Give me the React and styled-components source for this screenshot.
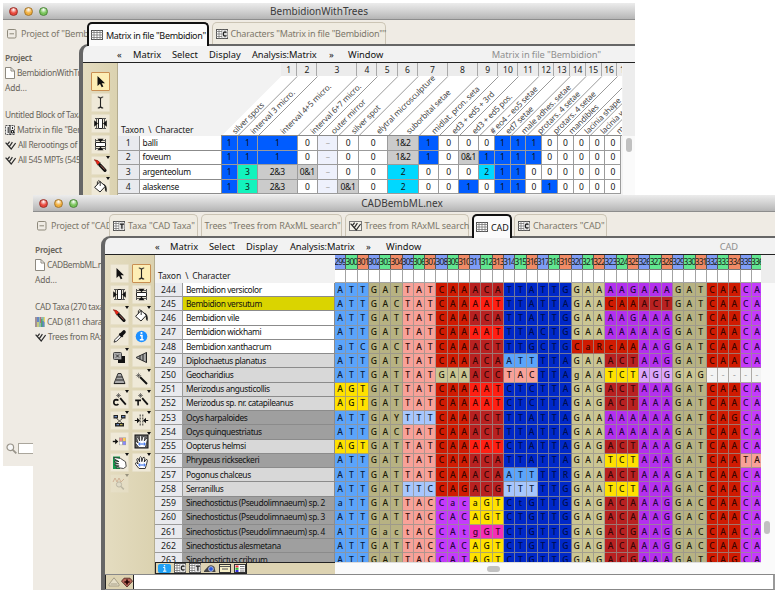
import React from "react";
import styled, { createGlobalStyle } from "styled-components";

const Global = createGlobalStyle`
  * { box-sizing: border-box; }
  html, body { margin: 0; padding: 0; background: #fff; overflow: hidden; }
  body { font-family: "Noto Sans", "Open Sans", sans-serif; color: #1c1c1c; }
  svg { display: block; flex: none; }
`;

const Desktop = styled.div`
  position: relative;
  width: 775px;
  height: 590px;
  overflow: hidden;
  background: #fff;
`;

const Window = styled.section`
  position: absolute;
  left: ${(p) => p.$x}px;
  top: ${(p) => p.$y}px;
  width: ${(p) => p.$w}px;
  height: ${(p) => p.$h}px;
  display: flex;
  flex-direction: column;
  background: #efebe4;
  overflow: hidden;
`;

const TitleBar = styled.header`
  flex: none;
  height: 17px;
  display: grid;
  grid-template-columns: 60px 1fr 60px;
  align-items: center;
  padding-left: ${(p) => p.$pad}px;
  background: linear-gradient(#ececec, #d2d2d2 50%, #b5b5b5);
  border-bottom: 1px solid #8d8d8d;
`;

const Lights = styled.div`
  display: flex;
  gap: 6px;
`;

const Light = styled.i`
  width: 9px;
  height: 9px;
  border-radius: 50%;
  border: 1px solid ${(p) => p.$edge};
  background: radial-gradient(circle at 50% 25%, #fff 0, ${(p) => p.$c} 55%);
`;

const Title = styled.h1`
  margin: 0;
  font-size: 10px;
  line-height: 14px;
  font-weight: 400;
  text-align: center;
  letter-spacing: ${(p) => p.$track || 0}px;
  padding-right: ${(p) => p.$shift || 0}px;
  color: #3a3a3a;
`;

const TabStrip = styled.nav`
  flex: none;
  height: 24px;
  display: flex;
  align-items: flex-end;
  position: relative;
  z-index: 1;
`;

const ProjectTab = styled.div`
  flex: none;
  height: 21px;
  width: ${(p) => p.$w}px;
  padding-left: 4px;
  display: flex;
  align-items: center;
  gap: 4px;
  overflow: hidden;
  white-space: nowrap;
  font-size: 9px;
  letter-spacing: -0.22px;
  color: #7d786b;
`;

const Tab = styled.div`
  flex: none;
  height: ${(p) => (p.$on ? 24 : 22)}px;
  width: ${(p) => p.$w}px;
  margin-right: ${(p) => p.$gap ?? 3}px;
  margin-bottom: ${(p) => (p.$on ? -2 : 0)}px;
  padding: 0 0 0 ${(p) => (p.$on ? 2 : 3)}px;
  display: flex;
  align-items: center;
  gap: 3px;
  white-space: nowrap;
  font-size: 9px;
  letter-spacing: ${(p) => p.$track ?? -0.15}px;
  border: ${(p) => (p.$on ? "2px solid #111" : "1px solid #cbc4b4")};
  border-bottom: 0;
  border-radius: 5px 5px 0 0;
  background: ${(p) => (p.$on ? "#fbfbfb" : "#efebe1")};
  color: ${(p) => (p.$on ? "#111" : "#7d786b")};
`;

const Main = styled.div`
  flex: 1;
  min-height: 0;
  display: flex;
`;

const Sidebar = styled.aside`
  flex: none;
  width: ${(p) => p.$w}px;
  padding: ${(p) => p.$top}px 0 0 2px;
  overflow: hidden;
  white-space: nowrap;
  display: flex;
  flex-direction: column;
  color: #69655b;
`;

const SideItem = styled.div`
  flex: none;
  height: 15px;
  margin-top: ${(p) => p.$gap || 0}px;
  display: flex;
  align-items: center;
  gap: 2px;
  font-size: 8.4px;
  letter-spacing: ${(p) => (p.$head ? -0.25 : p.$track ?? -0.34)}px;
  font-weight: ${(p) => (p.$head ? 600 : 400)};
`;

const Search = styled.div`
  margin-top: auto;
  height: 29px;
  padding: 0 0 7px 1px;
  display: flex;
  align-items: center;
  gap: 1px;
`;

const SearchField = styled.div`
  flex: 1;
  height: 11px;
  border: 1px solid #aaa69c;
  background: #fff;
`;

const Panel = styled.main`
  flex: 1;
  min-width: 0;
  display: flex;
  flex-direction: column;
  border-left: 4px solid #666;
  border-top: 2px solid #666;
  border-top-left-radius: 9px;
  background: #f2f2f2;
  overflow: hidden;
`;

const MenuBar = styled.div`
  flex: none;
  height: 17px;
  padding-left: ${(p) => p.$pad}px;
  display: flex;
  align-items: center;
  border-bottom: 1px solid #222;
  font-size: 9.3px;
  white-space: nowrap;
  color: #111;
`;

const MenuItem = styled.span`
  width: ${(p) => p.$w}px;
  letter-spacing: ${(p) => p.$track || 0}px;
`;

const MenuTitle = styled.span`
  margin-left: auto;
  padding-right: ${(p) => p.$pad}px;
  letter-spacing: -0.1px;
  color: #8f8f8f;
`;

const Work = styled.div`
  flex: 1;
  min-height: 0;
  display: flex;
`;

const ToolPalette = styled.div`
  flex: none;
  width: ${(p) => p.$w}px;
  padding: 9px 0 0 ${(p) => p.$pad}px;
  display: grid;
  grid-template-columns: repeat(${(p) => p.$cols}, 19px);
  grid-auto-rows: 19px;
  column-gap: 2.5px;
  row-gap: 2px;
  align-content: start;
  background: linear-gradient(90deg, #e4dcc0, #dbd2b0);
  border-right: 1px solid #b5ad90;
`;

const ToolButton = styled.button`
  position: relative;
  padding: 0;
  display: grid;
  place-items: center;
  border: 1px solid ${(p) => (p.$on ? "#c98f52" : "#e6dfc8")};
  background: ${(p) => (p.$on ? "#fdeeb5" : "#efe9d8")};
  border-radius: 1px;
  opacity: ${(p) => (p.$dim ? 0.35 : 1)};
`;

const MenuMark = styled.i`
  position: absolute;
  top: -1px;
  right: -1px;
  border: 2.5px solid transparent;
  border-top: 3.5px solid #111;
  border-bottom: 0;
`;

const Sheet = styled.div`
  flex: 1;
  min-width: 0;
  display: flex;
  flex-direction: column;
  overflow: hidden;
`;

/* ---------- character matrix (back window) ---------- */

const SlantHeader = styled.div`
  flex: none;
  height: 73px;
  display: flex;
  align-items: flex-end;
`;

const CornerLabel = styled.div`
  width: ${(p) => p.$w}px;
  padding: 0 0 ${(p) => p.$bottom ?? 0}px 3px;
  font-size: 8.6px;
  line-height: 12px;
  letter-spacing: -0.15px;
  word-spacing: 2px;
  white-space: nowrap;
  color: #222;
`;

const Columns = styled.div`
  display: grid;
  grid-template-columns: ${(p) => p.$cols};
  grid-auto-rows: ${(p) => p.$row}px;
`;

const NumberedTop = styled.div`
  height: 73px;
  width: 401px;
  overflow: hidden;
  display: flex;
  flex-direction: column;
`;

const NumberRow = styled(Columns)`
  margin-left: 60px;
  width: 500px;
`;

const TopNumber = styled.div`
  display: grid;
  place-items: center;
  font-size: 8.5px;
  line-height: 12px;
  background: #ececec;
  border-right: 1px solid #a9a9a9;
  color: #222;
`;

const TraitRow = styled(Columns)`
  width: 505px;
  overflow: hidden;
`;

const IndexCell = styled.div`
  display: flex;
  align-items: center;
  justify-content: center;
  font-size: 8.7px;
  line-height: 12px;
  background: #e9eaee;
  border-right: 1px solid #9b9b9b;
  border-bottom: 1px solid #9b9b9b;
`;

const taxonTint = { white: "#ffffff", yellow: "#dad400", light: "#d8d8d8", dark: "#9f9f9f" };

const TaxonCell = styled.div`
  display: flex;
  align-items: center;
  padding-left: 3px;
  font-size: 8.4px;
  line-height: 12px;
  letter-spacing: ${(p) => p.$track ?? -0.38}px;
  white-space: nowrap;
  overflow: hidden;
  background: ${(p) => taxonTint[p.$tint || "white"]};
  border-right: 1px solid #8b8b8b;
  border-bottom: 1px solid #8b8b8b;
  color: #111;
`;

const StateCell = styled.div`
  display: grid;
  place-items: center;
  font-size: 8.5px;
  line-height: 12px;
  letter-spacing: -0.3px;
  background: ${(p) => p.$bg};
  color: ${(p) => (p.$faint ? "#aaa" : "#111")};
  border-right: 1px solid #9b9b9b;
  border-bottom: 1px solid #9b9b9b;
`;

const ScrollTrack = styled.div`
  flex: none;
  width: ${(p) => p.$w}px;
  padding: ${(p) => p.$top}px 0 0 ${(p) => p.$left}px;
  background: linear-gradient(#ededed ${(p) => p.$start}px, #fafafa ${(p) => p.$start}px);
`;

const Thumb = styled.div`
  width: ${(p) => p.$w}px;
  height: ${(p) => p.$h}px;
  border-radius: 4px;
  background: #c1c1c1;
`;

/* ---------- sequence matrix (front window) ---------- */

const SiteHeader = styled.div`
  flex: none;
  height: 28px;
  display: flex;
  align-items: flex-end;
`;

const Sites = styled.div`
  width: 426px;
  overflow: hidden;
  display: grid;
  grid-template-columns: repeat(38, 11.27px);
  grid-template-rows: ${(p) => p.$rows};
`;

const siteTint = ["#7f9df5", "#62e690", "#f08b66"];

const SiteNumber = styled.div`
  display: flex;
  justify-content: center;
  overflow: hidden;
  font-size: 8.4px;
  line-height: 13px;
  letter-spacing: -0.85px;
  background: ${(p) => siteTint[p.$k]};
  border-right: 1px solid #555;
  color: #182018;
  white-space: nowrap;
`;

const SiteBlank = styled.div`
  background: #fff;
  border-right: 1px solid #a3a3a3;
  border-bottom: 1px solid #a3a3a3;
  border-top: 1px solid #777;
`;

const SeqArea = styled.div`
  flex: 1;
  min-height: 0;
  overflow: hidden;
`;

const SeqRow = styled.div`
  display: flex;
  height: 14.24px;
`;

const RowHead = styled(Columns)`
  width: 180px;
  flex: none;
`;

const Base = styled.div`
  display: grid;
  place-items: center;
  font-size: 8.6px;
  font-weight: 500;
  line-height: 12px;
  background: ${(p) => p.$bg};
  color: ${(p) => p.$fg};
  border-right: 1px solid rgba(150, 145, 140, 0.75);
  border-bottom: 1px solid rgba(150, 145, 140, 0.75);
`;

const SheetFoot = styled.div`
  flex: none;
  height: 12px;
  display: flex;
`;

const IconShelf = styled.div`
  width: 92px;
  display: flex;
  align-items: center;
  gap: 3px;
  padding-left: 2px;
  border: 1px solid #222;
  background: #ddd3b2;
`;

const ShelfRest = styled.div`
  width: 88px;
  background: #ddd3b2;
  border-top: 1px solid #222;
`;

const HorizontalTrack = styled.div`
  width: 426px;
  padding: 3px 0 0 152px;
  background: #fafafa;
  border-top: 1px solid #ddd;
`;

const StatusBar = styled.div`
  flex: none;
  height: 16px;
  display: flex;
  border-top: 1px solid #888;
  border-bottom: 1px solid #888;
  border-right: 2px solid #999;
  background: #fff;
`;

const StatusIcons = styled.div`
  width: 29px;
  display: flex;
  align-items: center;
  gap: 1px;
  padding-left: 2px;
  border: 1px solid #222;
  border-width: 0 1px 0 1px;
  background: #ddd3b2;
`;

/* ---------- icons ---------- */

const MinusBox = () => (
  <svg width="10" height="10" viewBox="0 0 10 10" fill="none" stroke="#8e897b">
    <rect x="0.5" y="0.5" width="8.5" height="8.5" rx="1.2" />
    <path d="M2.5 4.8H7" />
  </svg>
);

const GridIcon = ({ letter }) => (
  <svg width="12" height="10" viewBox="0 0 12 10">
    <rect x="0.5" y="0.5" width="11" height="9" fill="#fff" stroke="#555" />
    <path d="M0 2.5H12M0 5H12M0 7.5H12M3 0V10M6 0V10M9 0V10" stroke="#777" strokeWidth="0.8" />
    {letter && (
      <>
        <rect x="6" y="1.5" width="5.5" height="7" fill="#ddd" />
        {letter === "C" ? (
          <path d="M10.4 3.6Q9.8 2.8 8.9 2.8Q7.3 3 7.3 5Q7.3 7 8.9 7.2Q9.8 7.2 10.4 6.4" fill="none" stroke="#222" strokeWidth="1.3" />
        ) : (
          <path d="M6.8 3.2H11M8.9 3V7.8" fill="none" stroke="#222" strokeWidth="1.3" />
        )}
      </>
    )}
  </svg>
);

const TreeIcon = ({ boxed }) => (
  <svg width={boxed ? 13 : 11} height="10" viewBox={boxed ? "-1 0 13 10" : "0 0 11 10"} fill="none" stroke="#2b2b2b" strokeWidth="1.2">
    {boxed && <rect x="-0.5" y="0.5" width="12" height="9" fill="#f4f2ea" stroke="#777" strokeWidth="1" />}
    <path d="M0.6 2.6L6.2 9L10.6 3M2.4 4.7L4.6 1.6M4.2 6.8L7.4 2.2" />
  </svg>
);

const PageIcon = () => (
  <svg width="10" height="12" viewBox="0 0 10 12">
    <path d="M0.5 0.5H6L9.5 4V11.5H0.5Z" fill="#fff" stroke="#8d8980" />
    <path d="M6 0.5V4H9.5" fill="none" stroke="#8d8980" />
  </svg>
);

const MiniMatrix = () => (
  <svg width="10" height="10" viewBox="0 0 10 10">
    <rect x="0.5" y="0.5" width="9" height="9" fill="#eee" stroke="#555" strokeDasharray="2 1" />
    <path d="M3.2 2V8M5 0V10M7.5 2V4M6.5 5.5H8.5V8H6.5Z" stroke="#222" fill="none" />
  </svg>
);

const ColorMatrix = () => (
  <svg width="10" height="10" viewBox="0 0 10 10">
    <rect width="10" height="10" fill="#8fb8b0" />
    <path d="M1 0V10M5.5 0V6" stroke="#b86a78" strokeWidth="1" />
    <path d="M3 0V5M8 4V10" stroke="#5672d0" strokeWidth="1.4" />
    <path d="M3 5V10M9.5 0V5" stroke="#e8d860" strokeWidth="1.2" />
    <path d="M6.8 2V10" stroke="#38a050" strokeWidth="1" />
  </svg>
);

const Lens = () => (
  <svg width="11" height="11" viewBox="0 0 11 11" fill="none" stroke="#99948a">
    <circle cx="4.3" cy="4.3" r="3.3" fill="#f7f7f7" strokeWidth="1.2" />
    <path d="M6.8 6.8L10.3 10.3" strokeWidth="1.8" />
  </svg>
);

const palm =
  "M5 13.5L1.8 9.6Q0.8 7.8 2.4 7.7L4.2 9L2.8 4.6Q3 3 4.3 3.8L5.6 7L5.6 2.6Q6.5 1 7.5 2.6L7.8 6.6L9 2.6Q10.4 1.6 10.8 3.2L10.3 7L12 4.6Q13.4 4.2 13.4 5.6L12.2 10.5L11.2 13.5Z";

const drawings = {
  arrow: <path d="M4.5 2V12L7 9.8L8.7 13.3L10.4 12.4L8.7 9.2H12Z" fill="#111" />,
  ibeam: <path d="M4.8 2Q7.5 2 7.5 4V11Q7.5 13 4.8 13M10.2 2Q7.5 2 7.5 4V11Q7.5 13 10.2 13" fill="none" stroke="#222" strokeWidth="1.1" />,
  widen: (
    <>
      <path d="M5.5 2.5H9.5V12.5H5.5Z" fill="#fff" stroke="#222" />
      <path d="M2 2.5H5M10 2.5H13M2 12.5H5M10 12.5H13M3.5 2.5V12.5M11.5 2.5V12.5" stroke="#555" />
      <path d="M5 7.5L1.2 4.2V10.8ZM10 7.5L13.8 4.2V10.8Z" fill="#111" />
    </>
  ),
  heighten: (
    <>
      <path d="M2.5 5.5H12.5V9.5H2.5Z" fill="#fff" stroke="#222" />
      <path d="M2.5 2V5M12.5 2V5M2.5 10V13M12.5 10V13M2.5 3.5H12.5M2.5 11.5H12.5" stroke="#555" />
      <path d="M7.5 5.2L4.4 1.8H10.6ZM7.5 9.8L4.4 13.2H10.6Z" fill="#111" />
    </>
  ),
  brush: (
    <>
      <path d="M6.8 6.8L12 12.4" stroke="#111" strokeWidth="3.2" strokeLinecap="round" />
      <path d="M7.6 7.2L11.8 11.6" stroke="#b06058" strokeWidth="1" />
      <path d="M1.2 1.8Q5.4 1.8 7 4.8L4.8 7Q3.4 5.6 3 3.8Q2.4 2.6 1.2 1.8" fill="#ea2214" stroke="#601008" strokeWidth="0.5" />
      <path d="M4.8 7L7.2 4.8" stroke="#222" strokeWidth="1" />
    </>
  ),
  bucket: (
    <>
      <path d="M7 2.5L12.4 7.2L7 13L1.6 8.4Z" fill="#fff" stroke="#222" />
      <path d="M4.4 5.5V2.8Q5.8 0.4 7.2 2.8V7" fill="none" stroke="#222" strokeWidth="0.9" />
      <path d="M10 4.4Q14.8 6 13.6 13Q11.6 12.6 11.8 7.4Z" fill="#222" />
    </>
  ),
  dropper: (
    <>
      <path d="M2 13.2L3 10.6L8.4 5.2L10 6.8L4.7 12.2Z" fill="#fff" stroke="#222" strokeWidth="0.9" />
      <path d="M7.4 4.5L10.7 7.8" stroke="#111" strokeWidth="2" />
      <path d="M9.3 5.7L12 3" stroke="#111" strokeWidth="3.6" strokeLinecap="round" />
    </>
  ),
  info: (
    <>
      <circle cx="7.5" cy="7.5" r="5.8" fill="#1e90ff" />
      <path d="M6 6.4H8V10.6M5.8 10.8H9.6" stroke="#fff" strokeWidth="1.5" fill="none" />
      <circle cx="7.5" cy="4" r="1.1" fill="#fff" />
    </>
  ),
  stack: (
    <>
      <rect x="6" y="6" width="7" height="7" fill="#111" />
      <rect x="1.5" y="2.5" width="8" height="7" rx="1" fill="#aaa" stroke="#444" />
      <path d="M4 4.5L7 7.5M7 4.5L4 7.5" stroke="#333" fill="none" />
    </>
  ),
  left: (
    <>
      <path d="M2 7.5L12.5 2.5V12.5Z" fill="#aaa" stroke="#333" />
      <path d="M6 5.5V9.5M9 4.2V10.8M12.4 2.5V12.5" stroke="#222" />
    </>
  ),
  cone: (
    <>
      <path d="M6 2.5H9L13 12.5H2Z" fill="#aaa" stroke="#333" />
      <path d="M5 6H10M4 9H11.5M2 12.6H13" stroke="#222" />
    </>
  ),
  wand: (
    <>
      <path d="M6 6L13 13" stroke="#111" strokeWidth="1.9" />
      <path d="M4.5 1.8V7.2M1.8 4.5H7.2M2.8 2.8L6.2 6.2M6.2 2.8L2.8 6.2" stroke="#444" strokeWidth="0.6" />
    </>
  ),
  wandC: (
    <>
      <path d="M8.2 6.2L13.8 12.6" stroke="#111" strokeWidth="1.8" />
      <path d="M6.5 1V6M4 3.5H9M4.9 1.9L8.1 5.1M8.1 1.9L4.9 5.1" stroke="#444" strokeWidth="0.6" />
      <path d="M6.4 8.6Q5.6 7.6 4.2 7.6Q1.8 7.8 1.8 10.2Q1.8 12.8 4.2 13Q5.6 13 6.4 12" fill="none" stroke="#111" strokeWidth="1.6" />
    </>
  ),
  wandT: (
    <>
      <path d="M8.2 6.2L13.8 12.6" stroke="#111" strokeWidth="1.8" />
      <path d="M6.5 1V6M4 3.5H9M4.9 1.9L8.1 5.1M8.1 1.9L4.9 5.1" stroke="#444" strokeWidth="0.6" />
      <path d="M1.2 8.4H7M4.1 8.4V13.6" fill="none" stroke="#111" strokeWidth="1.6" />
    </>
  ),
  swap: (
    <>
      <path d="M1.5 2H6V5.5H1.5ZM9 2H13.5V5.5H9ZM3 10H12V13.5H3Z" fill="#222" />
      <path d="M4.5 5.5L10 10M10.5 5.5L5 10" stroke="#333" strokeWidth="0.8" />
      <path d="M2.5 3.7H5M10 3.7H12.5M4.5 11.7H7" stroke="#7ba0e8" />
      <path d="M8 11.7H10.5" stroke="#d8c860" />
    </>
  ),
  split: (
    <>
      <path d="M6.2 1.5V13.5M8.8 1.5V13.5" stroke="#222" strokeWidth="0.9" strokeDasharray="2 1" />
      <path d="M0.8 7.5H4M11 7.5H14.2" stroke="#111" strokeWidth="1.2" />
      <path d="M6 7.5L3 4.8V10.2ZM9 7.5L12 4.8V10.2Z" fill="#111" />
    </>
  ),
  toColor: (
    <>
      <path d="M0.8 7.5H4" stroke="#111" strokeWidth="1.4" />
      <path d="M6.3 7.5L3.2 4.8V10.2Z" fill="#111" />
      <rect x="7" y="3.5" width="7" height="7.6" fill="#999" />
      <rect x="7.6" y="4" width="2.6" height="3" fill="#e88" />
      <rect x="11" y="4" width="2.6" height="3" fill="#fc5" />
      <rect x="7.6" y="7.7" width="2.6" height="3" fill="#fff" />
      <rect x="11" y="7.7" width="2.6" height="3" fill="#88f" />
    </>
  ),
  handBox: (
    <>
      <rect x="1" y="1" width="13" height="13" fill="#666" stroke="#111" />
      <path d={palm} fill="#fff" stroke="#222" strokeWidth="0.7" />
      <path d="M5 10H11M6.2 8.5L4.6 10L6.2 11.5M9.8 8.5L11.4 10L9.8 11.5" stroke="#2563e8" fill="none" />
    </>
  ),
  handGreen: (
    <>
      <rect x="1" y="1.5" width="7" height="12.5" fill="#169b50" />
      <path d="M2 2.5L8.5 3.4L13.5 6.8L14.2 11.5L11.5 13.5L7 12.8L4 13L4.6 11.6L7.2 11L3 10.4L3.2 9L6.6 8.8L2.4 7.2L2.8 5.9L7 6.6L2.2 3.9Z" fill="#fff" stroke="#222" strokeWidth="0.8" />
    </>
  ),
  hand: (
    <>
      <path d={palm} fill="#fff" stroke="#222" strokeWidth="0.9" />
      <path d="M5 10H11M6.2 8.5L4.6 10L6.2 11.5M9.8 8.5L11.4 10L9.8 11.5" stroke="#2563e8" fill="none" />
    </>
  ),
  search: (
    <>
      <path d="M1 6L3 2L5 6L7 2L9 6L12 3" fill="none" stroke="#b06a50" />
      <circle cx="7" cy="8.5" r="2.6" fill="#ddd" stroke="#777" />
      <path d="M9 10.5L11.8 13.4" stroke="#777" strokeWidth="1.6" />
    </>
  ),
};

const Tool = ({ name, on, menu, dim }) => (
  <ToolButton $on={on} $dim={dim} aria-label={name}>
    <svg width="15" height="15" viewBox="0 0 15 15">{drawings[name]}</svg>
    {menu && <MenuMark />}
  </ToolButton>
);

const InfoChip = () => (
  <svg width="13" height="9" viewBox="0 0 13 9">
    <rect width="13" height="9" rx="2" fill="#1ea0f5" />
    <path d="M5.2 3.5H6.8V7M5 7.2H8.4" stroke="#fff" fill="none" />
    <circle cx="6.5" cy="1.7" r="0.8" fill="#fff" />
  </svg>
);
const PlaneChip = () => (
  <svg width="12" height="9" viewBox="0 0 12 9">
    <path d="M0 7L4 2.5Q7.5 0 10.5 3L11.5 8H0Z" fill="#444" />
    <circle cx="7" cy="5" r="2.4" fill="#2c5ce0" stroke="#dde" strokeWidth="0.7" />
  </svg>
);
const PanelChip = () => (
  <svg width="12" height="9" viewBox="0 0 12 9">
    <rect x="0.5" y="0.5" width="11" height="8" fill="#f6efc8" stroke="#333" />
    <path d="M1 2.5H11M3 5H9" stroke="#555" />
  </svg>
);
const LegendChip = () => (
  <svg width="12" height="9" viewBox="0 0 12 9">
    <rect x="0.5" y="0.5" width="11" height="8" fill="#fff" stroke="#333" />
    <rect x="1.5" y="1.5" width="3" height="2" fill="#e33" />
    <rect x="1.5" y="3.8" width="3" height="2" fill="#3b3" />
    <rect x="1.5" y="6" width="3" height="2" fill="#33d" />
    <path d="M6 2.5H10.5M6 4.8H10.5M6 7H10.5" stroke="#555" strokeWidth="0.8" />
  </svg>
);
const UpTriangle = () => (
  <svg width="12" height="10" viewBox="0 0 12 10">
    <path d="M6 0.8L11 7.2V9H1V7.2Z" fill="#e6dfc8" stroke="#a79f88" />
    <path d="M2.5 7H9.5" stroke="#a79f88" />
  </svg>
);
const RedGem = () => (
  <svg width="12" height="11" viewBox="0 0 12 11">
    <path d="M3 1.2H9L11.5 4.2L6 10L0.5 4.2Z" fill="#b8685a" stroke="#4a201a" strokeWidth="0.8" />
    <path d="M6 2.4V7.6M3.4 5H8.6" stroke="#200" strokeWidth="1.6" />
  </svg>
);

/* ---------- data ---------- */

const edges = [
  221.5, 237.7, 258, 297.7, 318, 338.3, 358.7, 388.3, 418.7, 439, 459, 479.3, 495, 510.7, 526.5, 542.3,
  558, 574, 589.7, 605.6, 621.4, 637,
];
const widths = edges.slice(1).map((e, i) => +(e - edges[i]).toFixed(1));

const traits = [
  "silver spots", "interval 3 micro.", "interval 4+5 micro.", "interval 6+7 micro.", "outer mirror",
  "silver spot", "elytral microsculpture", "suborbital setae", "midlat. pron. seta", "ed3 + ed5 + 3rd",
  "ed3 + ed5 pos.", "# eo4 – eo5 setae", "ed7 setae", "male adhes. setae", "protars. 4 setae",
  "protars. 4 setae", "mandibles", "lacinia shape", "lacinia width", "mentum",
];

const species = [
  ["balli", "1 1 1 0 – 0 0 1&2 1 0 0 0 1 1 1 0 0 0 0 0"],
  ["foveum", "1 1 1 0 – 0 0 1&2 1 0 0&1 1 1 1 1 0 0 0 0 0"],
  ["argenteolum", "1 3 2&3 0&1 – 0 0 2 0 0 0 2 1 1 0 0 0 0 0 0"],
  ["alaskense", "1 3 2&3 0 – 0&1 0 2 0 0 1 0 1 1 0 1 0 0 0 0"],
];

const stateColor = (s) =>
  ({ 0: "#ffffff", 1: "#005cff", 2: "#00d8ff", 3: "#12f3bd", "–": "#eef1fc" }[s] || "#cbcbcb");

const sequences = [
  [244, "Bembidion versicolor", "white", "ATT GAT TAT CAA ACA TTA TTG GAA AAG AAA GAT CAA CA"],
  [245, "Bembidion versutum", "yellow", "ATT GAC TAT CAA AAT TTA TTA GAA CAA ACT GAT CAA CA"],
  [246, "Bembidion vile", "white", "ATT GAT TAT CAA ACA TTA TTG GAA AAG AAA GAT CAA CA"],
  [247, "Bembidion wickhami", "white", "ATT GAT TAT CAA AAT TTA CTG GAA AAA AAG GAT CAA CA"],
  [248, "Bembidion xanthacrum", "white", "aTC GAC TAT CAA ACT TTG CTG CaR cAA AAG GAT CAA CA"],
  [249, "Diplochaetus planatus", "light", "ATT GAT TAT CAA ACA ATT TTA GAA ACT AAG GAT CAA CA"],
  [250, "Geocharidius", "light", "ATT GAT TAT GAA ACC TAC TTA gAA TCT AGG GAG --- --"],
  [251, "Merizodus angusticollis", "light", "AGT GAT TAT CAA AAT CTC TTA GAG ACT AAA GAT CAA CA"],
  [252, "Merizodus sp. nr. catapileanus", "light", "AGT GAT TAT CAA AAT CTC TTA GAG ACT AAA GAT CAA CA"],
  [253, "Ocys harpaloides", "dark", "ATT GAY TTT CAA ACT TTA TTA GAA AAA AAA GAT CAG CA"],
  [254, "Ocys quinquestriatus", "dark", "ATT GAC TAT CAA ACT TTA TTA GAA AAA AAA GAT CAA CA"],
  [255, "Oopterus helmsi", "light", "AGT GAT TAT CAA AAT CTA TTA GAG ACT AAA GAT CAA CA"],
  [256, "Phrypeus rickseckeri", "dark", "ATT GAT TAT CAA ACA TTA TTA GAA TCT AAA GAT CAA TA"],
  [257, "Pogonus chalceus", "light", "ATT GAT TAT CAA ACA ATT TTR GAA ACT AAA GAT CAA CA"],
  [258, "Serranillus", "light", "ATT GAT TTC CAG ACG TTT TTG GAA TCT AAA GAC CAA CA"],
  [259, "Sinechostictus (Pseudolimnaeum) sp. 2", "dark", "aTT GAT TAC Cac aGT CtG TTG GAG ACA AAG GAC CAA CA"],
  [260, "Sinechostictus (Pseudolimnaeum) sp. 3", "dark", "ATT GAT TAC CAC AGT CTG TTG GAG ACA AAG GAC CAA CA"],
  [261, "Sinechostictus (Pseudolimnaeum) sp. 4", "dark", "ATT Gac tAC CAt gGT CTG TTG GAG ACG AAG GAC CAA CA"],
  [262, "Sinechostictus alesmetana", "dark", "ATT GAT TAC CAC AGT CTG TTG GAG ACA AAG GAC CAA CA"],
  [263, "Sinechostictus cribrum", "dark", "ATT GAT TAC CAT AGT CTG TTG GAG ACG AAA GAT CAG CA"],
];

const codonRules = [
  [/^AT/, "#5ba4fb", "#0b1c3a"],
  [/^GA[TCY]/, "#b7b283", "#1c1a08"],
  [/^GA/, "#cbc693", "#1c1a08"],
  [/^TA/, "#f8a198", "#2a0c08"],
  [/^CA[AGR]/, "#cf1b02", "#350400"],
  [/^CA/, "#c43bfb", "#25053a"],
  [/^AC/, "#b82121", "#330505"],
  [/^AA[TC]/, "#ff1f13", "#3a0300"],
  [/^AA/, "#b430ee", "#25053a"],
  [/^(AGT|TCT)/, "#ffe100", "#241f00"],
  [/^AGG/, "#dba4fb", "#241030"],
  [/^TT[TC]/, "#a7c6fd", "#0b1c3a"],
  [/^(TT|CT)/, "#0028c8", "#000d4a"],
  [/^GG/, "#f42db8", "#3a0328"],
];
const codonStyle = (c) => codonRules.find(([r]) => r.test(c.toUpperCase())) || [null, "#f3f3f3", "#aaa"];

const menus = ["«", "Matrix", "Select", "Display", "Analysis:Matrix", "»", "Window"];

const Menus = ({ pad, ws, title, right }) => (
  <MenuBar $pad={pad}>
    {menus.map((m, i) => (
      <MenuItem key={m} $w={ws[i]} $track={i === 4 ? -0.1 : 0}>{m}</MenuItem>
    ))}
    <MenuTitle $pad={right}>{title}</MenuTitle>
  </MenuBar>
);

const TrafficLights = () => (
  <Lights>
    <Light $c="#e8483c" $edge="#9c2d25" />
    <Light $c="#f0ae3c" $edge="#a5752a" />
    <Light $c="#79c45a" $edge="#4b8638" />
  </Lights>
);

const SlantLabels = () => (
  <svg width="402" height="60" viewBox="221 76 402 60">
    <path d="M221.5 136L281.5 76H640V136Z" fill="#fff" />
    {edges.slice(1).map((e) => (
      <path key={e} d={`M${e} 136L${e + 59.5} 76.5`} stroke="#8f8f8f" strokeWidth="0.9" />
    ))}
    <path d="M221 135.5H640" stroke="#8b8b8b" />
    {traits.map((t, i) => (
      <text
        key={i}
        transform={`translate(${(edges[i] + edges[i + 1]) / 2 + 6} 134.5) rotate(-44.8)`}
        fontSize="8"
        letterSpacing="-0.12"
        fill="#444"
      >
        {t}
      </text>
    ))}
  </svg>
);

const BackWindow = () => (
  <Window $x={3} $y={3} $w={632} $h={463}>
    <TitleBar $pad={6}>
      <TrafficLights />
      <Title $shift={6}>BembidionWithTrees</Title>
    </TitleBar>
    <TabStrip>
      <ProjectTab $w={84}><MinusBox />Project of "Bembidion"</ProjectTab>
      <Tab $on $w={122} $gap={2.5} $track={-0.33}><GridIcon />Matrix in file "Bembidion"</Tab>
      <Tab $w={174} $track={-0.2}><GridIcon letter="C" />Characters "Matrix in file "Bembidion""</Tab>
    </TabStrip>
    <Main>
      <Sidebar $w={76} $top={6}>
        <SideItem $head>Project</SideItem>
        <SideItem><PageIcon />BembidionWithTrees</SideItem>
        <SideItem $track={-0.1}>Add...</SideItem>
        <SideItem $gap={12}>Untitled Block of Taxa</SideItem>
        <SideItem $track={-0.25}><MiniMatrix />Matrix in file "Bembidion"</SideItem>
        <SideItem><TreeIcon />All Rerootings of tree</SideItem>
        <SideItem><TreeIcon />All 545 MPTs (545 trees)</SideItem>
        <Search><Lens /><SearchField /></Search>
      </Sidebar>
      <Panel>
        <Menus pad={34} ws={[16, 39, 37, 43, 77, 19, 50]} title={'Matrix in file "Bembidion"'} right={34} />
        <Work>
          <ToolPalette $cols={1} $w={35} $pad={8}>
            <Tool name="arrow" on />
            <Tool name="ibeam" />
            <Tool name="widen" />
            <Tool name="heighten" />
            <Tool name="brush" menu />
            <Tool name="bucket" menu />
          </ToolPalette>
          <Sheet>
            <SlantHeader>
              <CornerLabel $w={103}>Taxon \ Character</CornerLabel>
              <NumberedTop>
                <NumberRow $cols={widths.map((w) => w + "px").join(" ")} $row={13}>
                  {traits.slice(0, 17).map((_, i) => <TopNumber key={i}>{i + 1}</TopNumber>)}
                </NumberRow>
                <SlantLabels />
              </NumberedTop>
            </SlantHeader>
            {species.map(([name, states], r) => (
              <TraitRow key={name} $row={14.6} $cols={"21.5px 82px " + widths.map((w) => w + "px").join(" ")}>
                <IndexCell>{r + 1}</IndexCell>
                <TaxonCell $track={-0.25}>{name}</TaxonCell>
                {states.split(" ").map((s, i) => (
                  <StateCell key={i} $bg={stateColor(s)} $faint={s === "–"}>{s}</StateCell>
                ))}
              </TraitRow>
            ))}
          </Sheet>
          <ScrollTrack $w={12} $top={75} $left={3} $start={73}><Thumb $w={6} $h={14} /></ScrollTrack>
        </Work>
      </Panel>
    </Main>
  </Window>
);

const tools = [
  ["arrow"], ["ibeam", "on"], ["widen"], ["heighten"], ["brush", "menu"], ["bucket", "menu"],
  ["dropper"], ["info"], ["stack", "menu"], ["left"], ["cone"], ["wand", "menu"],
  ["wandC", "menu"], ["wandT", "menu"], ["swap", "menu"], ["split", "menu"], ["toColor"], ["handBox", "menu"],
  ["handGreen", "menu"], ["hand", "menu"], ["search", "dim"],
];

const FrontWindow = () => (
  <Window $x={33} $y={195} $w={742} $h={395}>
    <TitleBar $pad={6}>
      <TrafficLights />
      <Title $shift={10}>CADBembML.nex</Title>
    </TitleBar>
    <TabStrip>
      <ProjectTab $w={76}><MinusBox />Project of "CADBemb"</ProjectTab>
      <Tab $w={88.5} $track={-0.1}><GridIcon letter="T" />Taxa "CAD Taxa"</Tab>
      <Tab $w={141} $track={-0.1}>Trees "Trees from RAxML search"</Tab>
      <Tab $w={124.5} $track={-0.1}><TreeIcon boxed />Trees from RAxML search</Tab>
      <Tab $on $w={39.5} $gap={2.5}><GridIcon />CAD</Tab>
      <Tab $w={93} $track={-0.1}><GridIcon letter="C" />Characters "CAD"</Tab>
    </TabStrip>
    <Main>
      <Sidebar $w={68} $top={6}>
        <SideItem $head>Project</SideItem>
        <SideItem><PageIcon />CADBembML.nex</SideItem>
        <SideItem $track={-0.1}>Add...</SideItem>
        <SideItem $gap={12}>CAD Taxa (270 taxa)</SideItem>
        <SideItem><ColorMatrix />CAD (811 characters)</SideItem>
        <SideItem $track={-0.25}><TreeIcon />Trees from RAxML search</SideItem>
      </Sidebar>
      <Panel>
        <Menus pad={50} ws={[15, 39, 37, 44, 76, 20, 50]} title="CAD" right={37} />
        <Work>
          <ToolPalette $cols={2} $w={50} $pad={5}>
            {tools.map(([n, f]) => (
              <Tool key={n} name={n} on={f === "on"} menu={f === "menu" || f === "dim"} dim={f === "dim"} />
            ))}
          </ToolPalette>
          <Sheet>
            <SiteHeader>
              <CornerLabel $w={180} $bottom={1}>Taxon \ Character</CornerLabel>
              <Sites $rows="14px 14px">
                {Array.from({ length: 38 }, (_, i) => <SiteNumber key={i} $k={i % 3}>{299 + i}</SiteNumber>)}
                {Array.from({ length: 38 }, (_, i) => <SiteBlank key={i} />)}
              </Sites>
            </SiteHeader>
            <SeqArea>
              {sequences.map(([n, name, tint, seq]) => (
                <SeqRow key={n}>
                  <RowHead $cols="28px 152px" $row={14.24}>
                    <IndexCell>{n}</IndexCell>
                    <TaxonCell $tint={tint}>{name}</TaxonCell>
                  </RowHead>
                  <Sites $rows="14.24px">
                    {seq.split(" ").flatMap((c, g) => {
                      const [, bg, fg] = codonStyle(c);
                      return [...c].map((b, i) => <Base key={g * 3 + i} $bg={bg} $fg={fg}>{b}</Base>);
                    })}
                  </Sites>
                </SeqRow>
              ))}
            </SeqArea>
            <SheetFoot>
              <IconShelf>
                <InfoChip />
                <GridIcon letter="C" />
                <GridIcon letter="T" />
                <PlaneChip />
                <PanelChip />
                <LegendChip />
              </IconShelf>
              <ShelfRest />
              <HorizontalTrack><Thumb $w={13} $h={6} /></HorizontalTrack>
            </SheetFoot>
          </Sheet>
          <ScrollTrack $w={14} $top={266} $left={3} $start={28}><Thumb $w={6} $h={13} /></ScrollTrack>
        </Work>
        <StatusBar>
          <StatusIcons><UpTriangle /><RedGem /></StatusIcons>
        </StatusBar>
      </Panel>
    </Main>
  </Window>
);

export default function App() {
  return (
    <Desktop>
      <Global />
      <BackWindow />
      <FrontWindow />
    </Desktop>
  );
}
